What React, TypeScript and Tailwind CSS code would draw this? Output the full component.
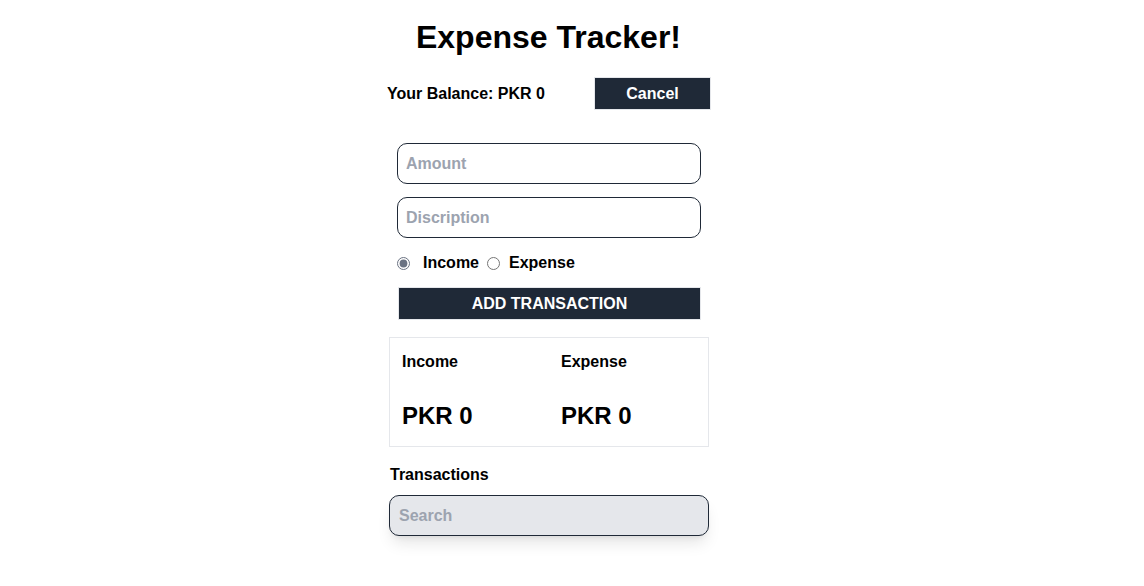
export default function App() {
  return (
    <main
      className="min-h-screen bg-white flex justify-center pr-[47px] text-black"
      style={{ fontFamily: '"Liberation Sans", Arial, sans-serif' }}
    >
      <div className="w-[323px] flex flex-col">
        {/* Header */}
        <h1 className="text-[32px] font-bold text-center leading-none mt-[21px]">Expense Tracker!</h1>

        <div className="flex items-center justify-between mt-[24px]">
          <h2 className="text-base font-bold">Your Balance: PKR 0</h2>
          <button className="w-[117px] h-[33px] mr-[-1px] bg-[#1f2937] text-white font-bold border border-[#e5e7eb]">
            Cancel
          </button>
        </div>

        {/* Form */}
        <div className="flex flex-col mx-[10px] mt-[33px] w-[304px]">
          <input
            placeholder="Amount"
            className="h-[41px] rounded-[10px] border border-[#1f2937] px-[8px] font-bold placeholder:text-[#9ca3af] outline-none"
          />
          <input
            placeholder="Discription"
            className="h-[41px] rounded-[10px] border border-[#1f2937] px-[8px] font-bold placeholder:text-[#9ca3af] outline-none mt-[13px]"
          />
          <div className="flex items-center mt-[15px] h-[20px] font-bold">
            <input type="radio" name="type" defaultChecked className="w-[13px] h-[13px] accent-gray-500" />
            <label className="ml-[13px]">Income</label>
            <input type="radio" name="type" className="w-[13px] h-[13px] ml-[8px]" />
            <label className="ml-[9px]">Expense</label>
          </div>
          <button className="h-[33px] mt-[14px] ml-[1px] w-[303px] bg-[#1f2937] text-white font-bold border border-[#e5e7eb]">
            ADD TRANSACTION
          </button>
        </div>

        {/* Summary */}
        <div className="flex w-[320px] ml-[2px] h-[110px] mt-[17px] border border-[#e5e7eb]">
          <div className="w-1/2 px-[12px] pt-[12px]">
            <h3 className="font-bold">Income</h3>
            <p className="text-2xl font-bold mt-[26px]">PKR 0</p>
          </div>
          <div className="w-1/2 px-[12px] pt-[12px]">
            <h3 className="font-bold">Expense</h3>
            <p className="text-2xl font-bold mt-[26px]">PKR 0</p>
          </div>
        </div>

        {/* Transactions */}
        <h3 className="font-bold mt-[16px] ml-[3px]">Transactions</h3>
        <input
          placeholder="Search"
          className="w-[320px] ml-[2px] h-[41px] mt-[8px] rounded-[10px] border border-[#1f2937] bg-[#e5e7eb] px-[9px] font-bold placeholder:text-[#9ca3af] shadow-lg outline-none"
        />
      </div>
    </main>
  );
}
